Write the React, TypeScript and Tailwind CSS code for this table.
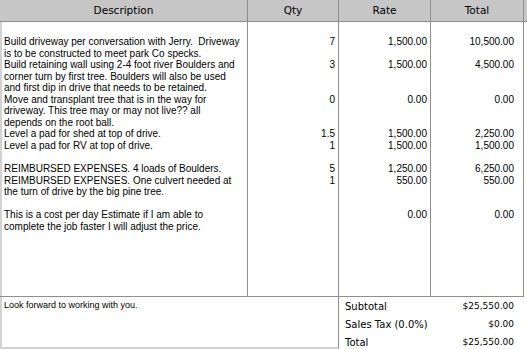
const rows = [
  {
    lines: ["Build driveway per conversation with Jerry.  Driveway", "is to be constructed to meet park Co specks."],
    qty: "7",
    rate: "1,500.00",
    total: "10,500.00",
  },
  {
    lines: [
      "Build retaining wall using 2-4 foot river Boulders and",
      "corner turn by first tree. Boulders will also be used",
      "and first dip in drive that needs to be retained.",
    ],
    qty: "3",
    rate: "1,500.00",
    total: "4,500.00",
  },
  {
    lines: [
      "Move and transplant tree that is in the way for",
      "driveway. This tree may or may not live?? all",
      "depends on the root ball.",
    ],
    qty: "0",
    rate: "0.00",
    total: "0.00",
  },
  { lines: ["Level a pad for shed at top of drive."], qty: "1.5", rate: "1,500.00", total: "2,250.00" },
  { lines: ["Level a pad for RV at top of drive.", ""], qty: "1", rate: "1,500.00", total: "1,500.00" },
  { lines: ["REIMBURSED EXPENSES. 4 loads of Boulders."], qty: "5", rate: "1,250.00", total: "6,250.00" },
  {
    lines: ["REIMBURSED EXPENSES. One culvert needed at", "the turn of drive by the big pine tree.", ""],
    qty: "1",
    rate: "550.00",
    total: "550.00",
  },
  {
    lines: ["This is a cost per day Estimate if I am able to", "complete the job faster I will adjust the price."],
    qty: "",
    rate: "0.00",
    total: "0.00",
  },
];

const totals = [
  { label: "Subtotal", value: "$25,550.00" },
  { label: "Sales Tax (0.0%)", value: "$0.00" },
  { label: "Total", value: "$25,550.00" },
];

type Key = "qty" | "rate" | "total";

// one number per item, padded with empty lines so it stays level with the description
function NumberCol({ field, className }: { field: Key; className: string }) {
  return (
    <div className={`pt-[14px] text-right text-[10px] leading-[11.55px] ${className}`}>
      {rows.map((r, i) =>
        r.lines.map((_, j) => (
          <div key={`${i}-${j}`} className="h-[11.55px]">
            {j === 0 ? r[field] : ""}
          </div>
        )),
      )}
    </div>
  );
}

export default function App() {
  return (
    <div className="flex h-[349px] w-[527px] flex-col overflow-hidden bg-white font-['Liberation_Sans',Arial,sans-serif] text-black">
      {/* header */}
      <div className="flex h-[22px] shrink-0 border-b border-[#8e8e8e] bg-[#c6c6c6] font-['DejaVu_Sans',sans-serif] text-[10.5px] leading-[21px]">
        <div className="w-[248px] border-r border-[#8e8e8e] text-center">Description</div>
        <div className="w-[91px] border-r border-[#8e8e8e] text-center">Qty</div>
        <div className="w-[92px] border-r border-[#8e8e8e] text-center">Rate</div>
        <div className="w-[93px] border-r border-[#8e8e8e] text-center">Total</div>
      </div>

      {/* line items */}
      <div className="h-[275px] w-[524px] shrink-0 border-b border-r border-[#8e8e8e]">
        <div className="flex h-full border-l-2 border-[#d2d2d2]">
          <div className="w-[246px] border-r border-[#8e8e8e] pl-[2px] pt-[14px] text-[10px] leading-[11.55px]">
            {rows.map((r, i) =>
              r.lines.map((l, j) => (
                <div key={`${i}-${j}`} className="h-[11.55px] whitespace-pre">
                  {l}
                </div>
              )),
            )}
          </div>
          <NumberCol field="qty" className="w-[91px] border-r border-[#8e8e8e] pr-[3px]" />
          <NumberCol field="rate" className="w-[92px] border-r border-[#8e8e8e] pr-[3px]" />
          <NumberCol field="total" className="flex-1 pr-[9px]" />
        </div>
      </div>

      {/* notes + totals */}
      <div className="flex flex-1">
        <div className="w-[339px] border-b-4 border-l-2 border-r border-b-[#d2d2d2] border-l-[#d2d2d2] border-r-[#8e8e8e] pl-[2px] pt-[2px] text-[9px] leading-[12px]">
          Look forward to working with you.
        </div>
        <div className="flex flex-1 flex-col pl-[6px] pr-[13px] pt-[1px] font-['DejaVu_Sans',sans-serif]">
          {totals.map((t) => (
            <div key={t.label} className="flex h-[17.8px] items-center justify-between">
              <span className="text-[10px]">{t.label}</span>
              <span className="text-[9px]">{t.value}</span>
            </div>
          ))}
        </div>
      </div>
    </div>
  );
}
